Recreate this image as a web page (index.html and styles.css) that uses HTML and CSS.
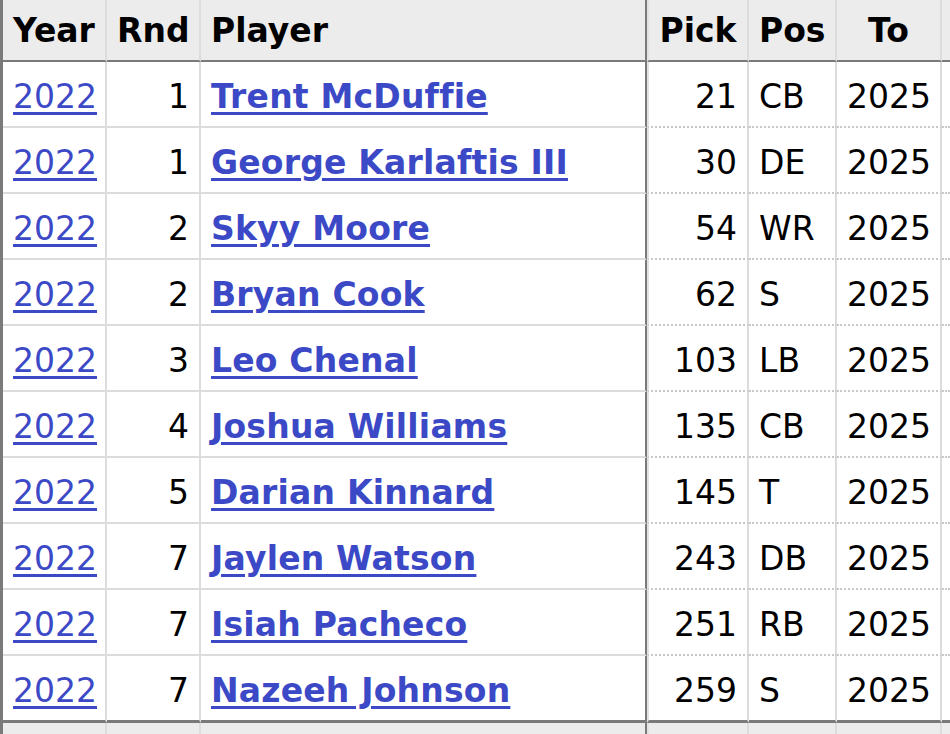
FILE: index.html
```html
<!DOCTYPE html>
<html>
<head>
<meta charset="utf-8">
<link rel="stylesheet" href="styles.css">
</head>
<body>
<table class="draft">
  <thead>
    <tr class="head">
      <th class="c-year">Year</th>
      <th class="c-rnd">Rnd</th>
      <th class="c-player">Player</th>
      <th class="c-pick">Pick</th>
      <th class="c-pos">Pos</th>
      <th class="c-to">To</th>
      <th class="c-extra"></th>
    </tr>
  </thead>
  <tbody>
    <tr class="row"><td class="c-year"><a href="#">2022</a></td><td class="c-rnd">1</td><td class="c-player"><a href="#">Trent McDuffie</a></td><td class="c-pick">21</td><td class="c-pos">CB</td><td class="c-to">2025</td><td class="c-extra"></td></tr>
    <tr class="row"><td class="c-year"><a href="#">2022</a></td><td class="c-rnd">1</td><td class="c-player"><a href="#">George Karlaftis III</a></td><td class="c-pick">30</td><td class="c-pos">DE</td><td class="c-to">2025</td><td class="c-extra"></td></tr>
    <tr class="row"><td class="c-year"><a href="#">2022</a></td><td class="c-rnd">2</td><td class="c-player"><a href="#">Skyy Moore</a></td><td class="c-pick">54</td><td class="c-pos">WR</td><td class="c-to">2025</td><td class="c-extra"></td></tr>
    <tr class="row"><td class="c-year"><a href="#">2022</a></td><td class="c-rnd">2</td><td class="c-player"><a href="#">Bryan Cook</a></td><td class="c-pick">62</td><td class="c-pos">S</td><td class="c-to">2025</td><td class="c-extra"></td></tr>
    <tr class="row"><td class="c-year"><a href="#">2022</a></td><td class="c-rnd">3</td><td class="c-player"><a href="#">Leo Chenal</a></td><td class="c-pick">103</td><td class="c-pos">LB</td><td class="c-to">2025</td><td class="c-extra"></td></tr>
    <tr class="row"><td class="c-year"><a href="#">2022</a></td><td class="c-rnd">4</td><td class="c-player"><a href="#">Joshua Williams</a></td><td class="c-pick">135</td><td class="c-pos">CB</td><td class="c-to">2025</td><td class="c-extra"></td></tr>
    <tr class="row"><td class="c-year"><a href="#">2022</a></td><td class="c-rnd">5</td><td class="c-player"><a href="#">Darian Kinnard</a></td><td class="c-pick">145</td><td class="c-pos">T</td><td class="c-to">2025</td><td class="c-extra"></td></tr>
    <tr class="row"><td class="c-year"><a href="#">2022</a></td><td class="c-rnd">7</td><td class="c-player"><a href="#">Jaylen Watson</a></td><td class="c-pick">243</td><td class="c-pos">DB</td><td class="c-to">2025</td><td class="c-extra"></td></tr>
    <tr class="row"><td class="c-year"><a href="#">2022</a></td><td class="c-rnd">7</td><td class="c-player"><a href="#">Isiah Pacheco</a></td><td class="c-pick">251</td><td class="c-pos">RB</td><td class="c-to">2025</td><td class="c-extra"></td></tr>
    <tr class="row last"><td class="c-year"><a href="#">2022</a></td><td class="c-rnd">7</td><td class="c-player"><a href="#">Nazeeh Johnson</a></td><td class="c-pick">259</td><td class="c-pos">S</td><td class="c-to">2025</td><td class="c-extra"></td></tr>
  </tbody>
  <tfoot>
    <tr class="foot"><td class="c-year"></td><td class="c-rnd"></td><td class="c-player"></td><td class="c-pick"></td><td class="c-pos"></td><td class="c-to"></td><td class="c-extra"></td></tr>
  </tfoot>
</table>
</body>
</html>
```

FILE: styles.css
```css
html, body {
  margin: 0;
  padding: 0;
  background: #ffffff;
  overflow: hidden;
}

.draft {
  font-family: "DejaVu Sans", Verdana, sans-serif;
  font-size: 33px;
  color: #000;
  border-collapse: separate;
  border-spacing: 0;
  table-layout: fixed;
  width: 950px;
  border-left: 3px solid #7a7a7a;
}

.draft th,
.draft td {
  box-sizing: border-box;
  padding: 0 10px;
  white-space: nowrap;
  overflow: hidden;
  vertical-align: middle;
  border-right: 2px solid #dcdcdc;
  border-bottom: 2px solid #dcdcdc;
}

.draft td { padding-top: 4px; }

.draft th {
  background: #ececec;
  font-weight: bold;
  text-align: center;
  padding-top: 1px;
  border-bottom: 2px solid #7a7a7a;
}

.head { height: 62px; }
.row { height: 66px; }
.row.last { height: 67px; }
.foot { height: 20px; }
.foot td { background: #ececec; border-bottom: none; }

.c-year { width: 104px; text-align: left; padding-left: 9px; }
.c-rnd { width: 94px; text-align: right; }
.c-player { width: 446px; text-align: left; }
.draft .c-player { border-right: 2px solid #7a7a7a; }
.c-pick { width: 102px; text-align: right; }
.draft .c-pick { border-left: 2px solid #e2e2e2; }
.c-pos { width: 88px; text-align: left; }
.c-to { width: 105px; text-align: right; }
.draft .c-extra { width: 8px; padding: 0; border-right: none; }

.draft th.c-year,
.draft th.c-rnd,
.draft th.c-pick,
.draft th.c-pos,
.draft th.c-to { text-align: center; }
.draft th.c-player { text-align: left; }

.row td.c-pick,
.row td.c-pos,
.row td.c-to,
.row td.c-extra {
  border-bottom: 2px dotted #c8c8c8;
}

.row.last td { border-bottom: 3px solid #7a7a7a; }

.draft a {
  color: #3c49c6;
  text-decoration: underline;
  text-decoration-thickness: 3px;
  text-underline-offset: 4px;
}

.c-player a { font-weight: bold; letter-spacing: 0.2px; }
```
